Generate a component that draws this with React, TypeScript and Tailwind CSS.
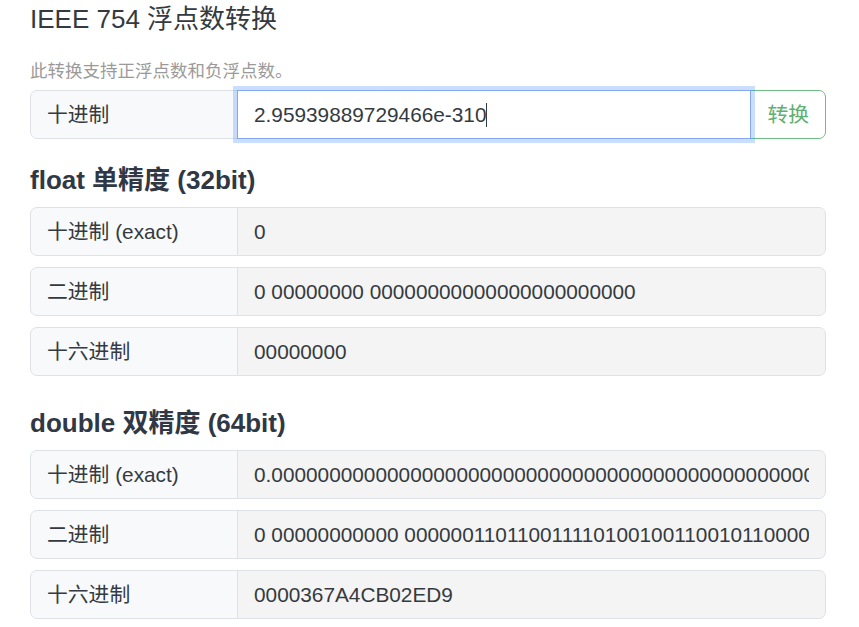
import React from 'react';

const font = { fontFamily: '"Liberation Sans", "Noto Sans CJK SC", sans-serif' };

const doubleDecimal = '0.' + '0'.repeat(309) + '295939889729465735';

const Row: React.FC<{ label: string; value: string }> = ({ label, value }) => (
  <div className="flex h-[49px] mb-[11px] text-[20.8px] text-[#343a40]">
    <div className="w-[208px] shrink-0 flex items-center px-4 bg-[#f8f9fa] border border-[#dee2e6] rounded-l-[7px] whitespace-nowrap">
      {label}
    </div>
    <input
      readOnly
      value={value}
      style={font}
      className="flex-1 min-w-0 -ml-px px-4 bg-[#f4f4f4] border border-[#dee2e6] rounded-r-[7px] text-[20.8px] text-[#343a40] outline-none"
    />
  </div>
);

export default function App() {
  return (
    <div style={font} className="min-h-screen bg-white pl-[30px] pr-[33px] pt-[4px] text-[#343a40]">
      <h1 className="text-[26px] leading-[31px] font-normal">IEEE 754 浮点数转换</h1>
      <p className="mt-[24px] text-[17.5px] leading-[25px] text-[#9a9a9a]">此转换支持正浮点数和负浮点数。</p>

      <div className="flex h-[49px] mt-[6px] text-[20.8px]">
        <div className="w-[208px] shrink-0 flex items-center px-4 bg-[#f8f9fa] border border-[#dee2e6] rounded-l-[7px]">
          十进制
        </div>
        <div className="relative z-10 flex-1 -ml-px flex items-center px-4 bg-white border border-[#86a8f2] shadow-[0_0_0_4px_rgba(13,110,253,0.22)]">
          <span>2.95939889729466e-310</span>
          <span className="inline-block w-px h-[24px] bg-[#343a40]" />
        </div>
        <button className="-ml-px px-4 border border-[#6fbf84] rounded-r-[7px] text-[#5fb073] bg-white">
          转换
        </button>
      </div>

      <h2 className="mt-[26px] mb-[11px] text-[26px] leading-[31px] font-bold text-[#2f3844]">float 单精度 (32bit)</h2>
      <Row label="十进制 (exact)" value="0" />
      <Row label="二进制" value="0 00000000 00000000000000000000000" />
      <Row label="十六进制" value="00000000" />

      <h2 className="mt-[32px] mb-[11px] text-[26px] leading-[31px] font-bold text-[#2f3844]">double 双精度 (64bit)</h2>
      <Row label="十进制 (exact)" value={doubleDecimal} />
      <Row label="二进制" value="0 00000000000 0000001101100111101001001100101100000010111011011001" />
      <Row label="十六进制" value="0000367A4CB02ED9" />
    </div>
  );
}
